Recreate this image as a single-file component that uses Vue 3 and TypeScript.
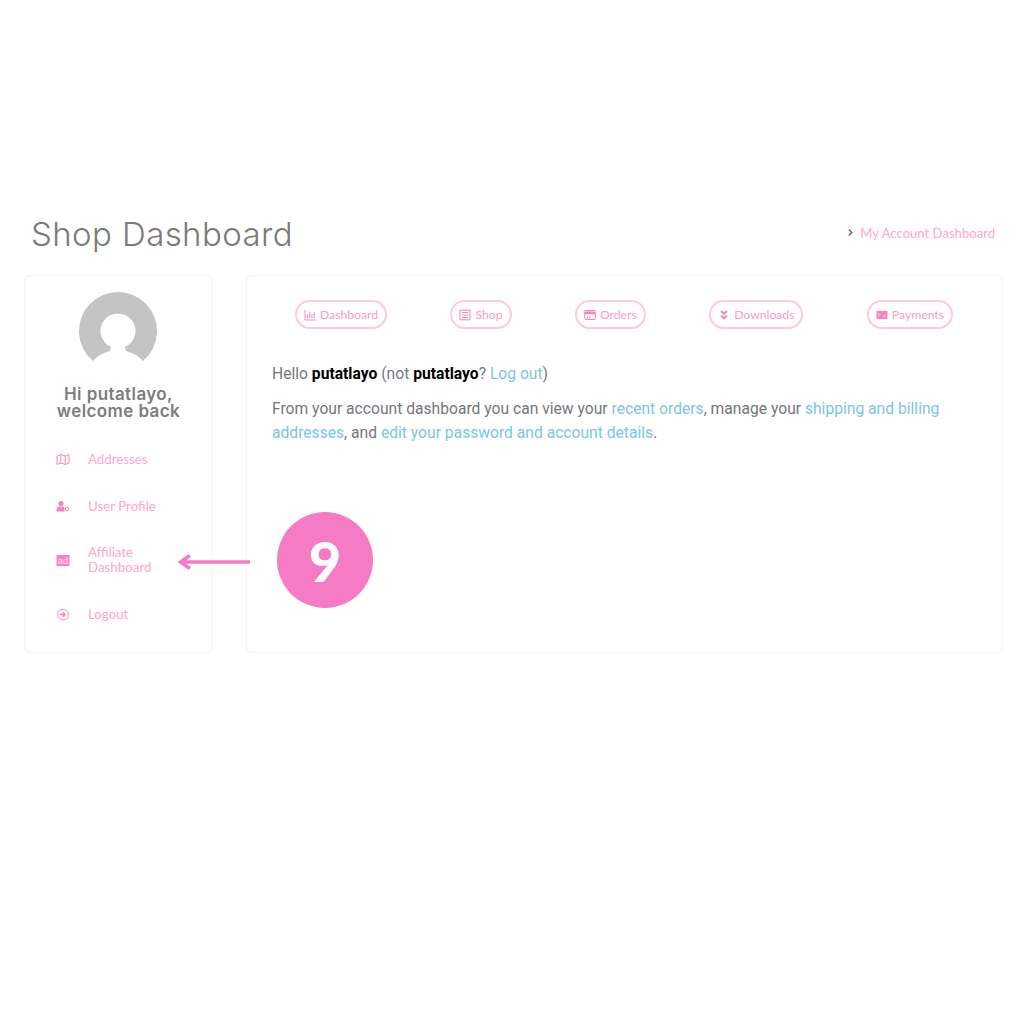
<template>
  <div class="page">
    <div class="page-head">
      <h1 class="page-title">Shop Dashboard</h1>
      <div class="crumb">
        <svg class="crumb-icon" viewBox="0 0 8 10"><path d="M2 1.500 5.500 5 2 8.500" /></svg>
        <a class="crumb-link">My Account Dashboard</a>
      </div>
    </div>

    <div class="columns">
      <aside class="card side">
        <svg class="avatar" viewBox="0 0 78 78">
          <path class="avatar-bg" d="M14 69A39 39 0 1 1 64 69C60 64 53 60.500 47 59L46 55A17.500 17.500 0 1 0 32 55L31 59C25 60.500 18 64 14 69Z" />
        </svg>
        <div class="greeting">Hi putatlayo,<br />welcome back</div>
        <nav class="side-nav">
          <a class="side-item">
            <svg class="side-icon" viewBox="0 0 14 12">
              <path class="line" d="M1 2.500 4.800 1 9.200 2.500 13 1V9.500L9.200 11 4.800 9.500 1 11ZM4.800 1V9.500M9.200 2.500V11" />
            </svg>
            <span>Addresses</span>
          </a>
          <a class="side-item">
            <svg class="side-icon" viewBox="0 0 14 12">
              <circle class="fill" cx="5" cy="3" r="2.600" />
              <path class="fill" d="M0.500 11V9C0.500 7.300 2 6.300 3.500 6.300H6.500C7.300 6.300 8 6.600 8.500 7V11Z" />
              <circle class="line" cx="11" cy="8.500" r="1.700" />
            </svg>
            <span>User Profile</span>
          </a>
          <a class="side-item">
            <svg class="side-icon" viewBox="0 0 14 12">
              <rect class="fill" x="0.500" y="0.500" width="13" height="11" />
              <text class="ad-text" x="7" y="9.400">ad</text>
            </svg>
            <span>Affiliate<br />Dashboard</span>
          </a>
          <a class="side-item">
            <svg class="side-icon" viewBox="0 0 14 14">
              <circle class="line" cx="7" cy="7" r="5.800" />
              <path class="fill" d="M3.800 6H7V3.800L10.500 7 7 10.200V8H3.800Z" />
            </svg>
            <span>Logout</span>
          </a>
        </nav>
      </aside>

      <main class="card content">
        <div class="pills">
          <a class="pill">
            <svg class="pill-icon" viewBox="0 0 12 12">
              <path class="line" d="M1 1V11H11.500" />
              <path class="line" d="M3.500 9V6M5.700 9V3.500M7.900 9V5M10.100 9V3" />
            </svg>
            Dashboard
          </a>
          <a class="pill">
            <svg class="pill-icon" viewBox="0 0 12 12">
              <rect class="line" x="1" y="1.200" width="10" height="9.600" />
              <path class="line" d="M3 3.500H9M3 6H9M3 8.500H9" />
            </svg>
            Shop
          </a>
          <a class="pill">
            <svg class="pill-icon" viewBox="0 0 12 12">
              <rect class="line" x="0.700" y="1.500" width="10.600" height="9" rx="1" />
              <path class="fill" d="M0.700 2.500H11.300V5.200H0.700ZM2.500 7.500H4V9H2.500ZM5 7.500H6.500V9H5Z" />
            </svg>
            Orders
          </a>
          <a class="pill">
            <svg class="pill-icon" viewBox="0 0 12 12">
              <path class="thick" d="M3 2 6 4.800 9 2M3 6.500 6 9.300 9 6.500" />
            </svg>
            Downloads
          </a>
          <a class="pill">
            <svg class="pill-icon" viewBox="0 0 12 12">
              <rect class="fill" x="0.500" y="2" width="11" height="8" rx="0.800" />
              <path class="cut" d="M2 5.200H4.500M2 7H3.500M7 7H10" />
            </svg>
            Payments
          </a>
        </div>

        <p class="hello">
          Hello <strong>putatlayo</strong> (not <strong>putatlayo</strong>?
          <a class="link">Log out</a>)
        </p>
        <p class="intro">
          From your account dashboard you can view your
          <a class="link">recent orders</a>, manage your
          <a class="link">shipping and billing addresses</a>, and
          <a class="link">edit your password and account details</a>.
        </p>
      </main>

      <!-- callout painted on top of the screenshot -->
      <svg class="callout-arrow" viewBox="0 0 74 16">
        <path d="M73 8H4M13 1.500 3.500 8 13 14.500" />
      </svg>
      <div class="callout-badge">9</div>
    </div>
  </div>
</template>

<script setup lang="ts">
</script>

<style>
html,
body {
  background: #fff;
}
</style>

<style scoped>
.page {
  width: 1024px;
  height: 1024px;
  box-sizing: border-box;
  padding: 214px 21px 0 24px;
  font-family: "Roboto", "Liberation Sans", sans-serif;
}

.page-head {
  display: flex;
  align-items: center;
  justify-content: space-between;
  height: 39px;
  padding: 0 8px 0 7px;
  margin-bottom: 22px;
}

.page-title {
  margin: 0;
  font-family: "Inter", "Open Sans", sans-serif;
  font-size: 33px;
  font-weight: 300;
  letter-spacing: 0.400px;
  color: #7a7a7a;
}

.crumb {
  display: flex;
  align-items: center;
  gap: 6px;
  margin-bottom: 2px;
  font-family: "Lato", "Open Sans", sans-serif;
  font-size: 13.100px;
}

.crumb-icon {
  width: 7px;
  height: 9px;
  fill: none;
  stroke: #6f6f6f;
  stroke-width: 1.800;
}

.crumb-link {
  color: #ffa6cf;
}

.columns {
  position: relative;
  display: flex;
  gap: 33px;
}

.card {
  box-sizing: border-box;
  height: 378px;
  background: #fff;
  border: 1px solid #f3f3f5;
  border-radius: 6px;
}

.side {
  display: flex;
  flex-direction: column;
  align-items: center;
  flex: 0 0 189px;
  padding-top: 16px;
}

.avatar {
  width: 78px;
  height: 78px;
  margin-right: 1px;
  flex-shrink: 0;
}

.avatar-bg {
  fill: #c4c4c4;
}

.greeting {
  margin-top: 16px;
  font-family: "Inter", "Open Sans", sans-serif;
  font-size: 17px;
  font-weight: 600;
  letter-spacing: 0.400px;
  line-height: 17px;
  text-align: center;
  color: #7d7d7d;
}

.side-nav {
  display: flex;
  flex-direction: column;
  gap: 31.500px;
  align-self: stretch;
  padding: 32px 0 0 31px;
}

.side-item {
  display: flex;
  align-items: center;
  gap: 18px;
  min-height: 15px;
  font-family: "Lato", "Open Sans", sans-serif;
  font-size: 13.300px;
  line-height: 15px;
  color: #ffa6cf;
}

.side-icon {
  width: 14px;
  height: 13px;
  flex-shrink: 0;
}

.line {
  fill: none;
  stroke: #fc82bd;
  stroke-width: 1;
}

.fill {
  fill: #fc82bd;
}

.thick {
  fill: none;
  stroke: #fc82bd;
  stroke-width: 2;
}

.cut {
  fill: none;
  stroke: #ffd9ea;
  stroke-width: 1;
}

.ad-text {
  font-family: "Liberation Sans", sans-serif;
  font-size: 9px;
  text-anchor: middle;
  fill: #ffe3f0;
}

.content {
  flex: 1;
  padding: 24px 49px 0 25px;
}

.pills {
  display: flex;
  justify-content: space-between;
  padding-left: 23px;
}

.pill {
  display: flex;
  align-items: center;
  gap: 4px;
  box-sizing: border-box;
  height: 29px;
  padding: 0 7px;
  border: 2px solid #ffc9e0;
  border-radius: 15px;
  font-family: "Lato", "Open Sans", sans-serif;
  font-size: 12.200px;
  color: #fb9cc8;
}

.pill-icon {
  width: 12px;
  height: 12px;
}

.hello,
.intro {
  margin: 0;
  font-size: 15.650px;
  line-height: 24px;
  color: #74777c;
}

.hello {
  margin-top: 33px;
}

.intro {
  margin-top: 11px;
}

.hello strong {
  font-weight: 700;
  color: #000;
}

.link {
  color: #7cc6e2;
}

.callout-arrow {
  position: absolute;
  left: 153px;
  top: 279px;
  width: 74px;
  height: 16px;
  fill: none;
  stroke: #f57bc4;
  stroke-width: 3.500;
}

.callout-badge {
  position: absolute;
  left: 253px;
  top: 237px;
  width: 96px;
  height: 96px;
  display: flex;
  align-items: center;
  justify-content: center;
  border-radius: 50%;
  background: #f57bc4;
  font-family: "Lato", "Liberation Sans", sans-serif;
  font-size: 56px;
  font-weight: 900;
  color: #fff;
}
</style>
